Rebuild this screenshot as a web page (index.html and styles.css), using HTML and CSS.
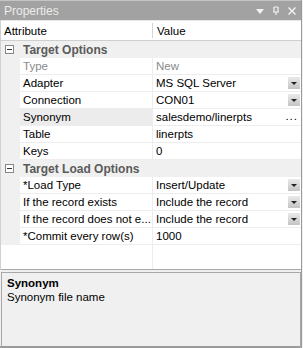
FILE: index.html
```html
<!DOCTYPE html>
<html lang="en">
<head>
    <meta charset="UTF-8">
    <title>Properties</title>
    <link rel="stylesheet" href="styles.css">
</head>
<body>

    <div class="panel">
        <div class="titlebar">
            <span class="title">Properties</span>
            <span class="tools">
                <svg width="10" height="10" viewBox="0 0 10 10"><path d="M1 3h8l-4 5z" fill="#f4f4f4"/></svg>
                <svg width="10" height="10" viewBox="0 0 10 10"><path d="M3 1v5M7 1v5M3 1h4M2 6h6M5 6v3" stroke="#f4f4f4" stroke-width="1.2" fill="none"/></svg>
                <svg width="10" height="10" viewBox="0 0 10 10"><path d="M1.5 1.5l7 7M8.5 1.5l-7 7" stroke="#f4f4f4" stroke-width="1.4"/></svg>
            </span>
        </div>

        <div class="grid">
            <div class="head">
                <div class="hcell">Attribute</div>
                <div class="hcell hval">Value</div>
            </div>

            <div class="cat"><span class="toggle"></span>Target Options</div>
            <div class="row"><div class="name off">Type</div><div class="val off">New</div></div>
            <div class="row"><div class="name">Adapter</div><div class="val">MS SQL Server<span class="drop"></span></div></div>
            <div class="row"><div class="name">Connection</div><div class="val">CON01<span class="drop"></span></div></div>
            <div class="row"><div class="name selected">Synonym</div><div class="val">salesdemo/linerpts<span class="dots">...</span></div></div>
            <div class="row"><div class="name">Table</div><div class="val">linerpts</div></div>
            <div class="row"><div class="name">Keys</div><div class="val">0</div></div>

            <div class="cat"><span class="toggle"></span>Target Load Options</div>
            <div class="row"><div class="name">*Load Type</div><div class="val">Insert/Update<span class="drop"></span></div></div>
            <div class="row"><div class="name">If the record exists</div><div class="val">Include the record<span class="drop"></span></div></div>
            <div class="row"><div class="name">If the record does not e...</div><div class="val">Include the record<span class="drop"></span></div></div>
            <div class="row"><div class="name">*Commit every row(s)</div><div class="val">1000</div></div>

            <div class="filler"><div></div><div class="fill-val"></div></div>
        </div>

        <div class="desc">
            <div class="desc-title">Synonym</div>
            <div>Synonym file name</div>
        </div>
    </div>

</body>
</html>
```

FILE: styles.css
```css
body {
    margin: 0;
    font-family: "Liberation Sans", Arial, sans-serif;
    font-size: 11.5px;
    color: #000;
    background-color: #f0f0f0;
}
.panel {
    width: 301px;
    height: 346px;
    border-right: 1px solid #9a9a9a;
    border-bottom: 2px solid #9a9a9a;
    background-color: #f0f0f0;
}
.titlebar {
    height: 20px;
    background-color: #a2a2a2;
    border-top: 1px solid #c4c4c4;
    box-sizing: border-box;
    display: flex;
    align-items: center;
    justify-content: space-between;
    padding: 0 4px 0 4px;
}
.title {
    color: #ececec;
    font-size: 12px;
}
.tools {
    display: flex;
    gap: 6px;
    padding-top: 1px;
}
.grid {
    background-color: #fff;
    border-left: 1px solid #d0d0d0;
}
.head {
    display: grid;
    grid-template-columns: 151px 1fr;
    height: 21px;
    border-bottom: 1px solid #cfcfcf;
    border-top: 1px solid #e6e6e6;
    box-sizing: border-box;
    background-color: #fff;
}
.hcell {
    padding: 4px 0 0 3px;
}
.hval {
    border-left: 1px solid #d4d4d4;
    margin: 2px 0;
    padding-top: 2px;
    padding-left: 4px;
}
.cat {
    height: 17px;
    background-color: #f0f0f0;
    font-weight: bold;
    color: #5a5a5a;
    display: flex;
    align-items: center;
    font-size: 12px;
}
.toggle {
    width: 7px;
    height: 7px;
    border: 1px solid #888;
    background-color: #fff;
    margin: 0 9px 0 4px;
    position: relative;
}
.toggle::after {
    content: "";
    position: absolute;
    left: 1px;
    top: 3px;
    width: 5px;
    height: 1px;
    background-color: #333;
}
.row {
    display: grid;
    grid-template-columns: 132px 1fr;
    padding-left: 19px;
    background-color: #f0f0f0;
    height: 17px;
}
.name, .val {
    background-color: #fff;
    border-bottom: 1px solid #ededed;
    padding-left: 3px;
    line-height: 16px;
    white-space: nowrap;
    overflow: hidden;
}
.val {
    border-left: 1px solid #ededed;
    padding-left: 3px;
    position: relative;
}
.off {
    color: #8a8a8a;
}
.selected {
    background-color: #ececec;
}
.drop {
    position: absolute;
    right: 1px;
    top: 2px;
    width: 12px;
    height: 12px;
    background: linear-gradient(#eaeaea, #c4c4c4);
}
.drop::after {
    content: "";
    position: absolute;
    left: 3px;
    top: 5px;
    border-left: 3px solid transparent;
    border-right: 3px solid transparent;
    border-top: 3px solid #222;
}
.dots {
    position: absolute;
    right: 3px;
    top: -1px;
    letter-spacing: 1px;
}
.filler {
    display: grid;
    grid-template-columns: 151px 1fr;
    height: 24px;
    border-bottom: 1px solid #a8a8a8;
}
.fill-val {
    border-left: 1px solid #ededed;
}
.desc {
    margin: 2px 0 0 1px;
    height: 71px;
    border: 1px solid #a8a8a8;
    padding: 3px 5px;
    line-height: 14px;
}
.desc-title {
    font-weight: bold;
}
```
